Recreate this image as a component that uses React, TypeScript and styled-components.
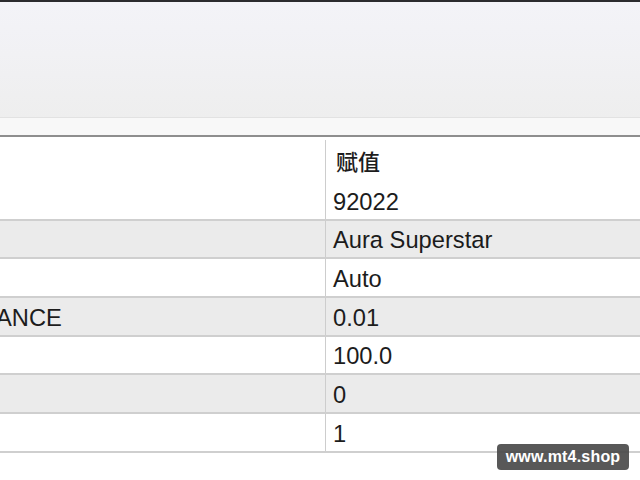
import React from "react";
import styled, { createGlobalStyle } from "styled-components";

const Global = createGlobalStyle`
  html, body { margin: 0; padding: 0; background: #ffffff; }
  body { width: 640px; height: 480px; overflow: hidden; font-family: "Liberation Sans", Arial, sans-serif; }
`;

const Page = styled.div`
  width: 640px;
  height: 480px;
  display: flex;
  flex-direction: column;
  overflow: hidden;
  position: relative;
  background: #ffffff;
`;

const TopEdge = styled.div`
  height: 2px;
  background: #2b2b2e;
  flex: none;
`;

const Toolbar = styled.div`
  height: 115px;
  flex: none;
  background: linear-gradient(#f3f3f8 0%, #f1f1f4 45%, #eeeeee 100%);
  border-bottom: 1px solid #e2e2e2;
`;

const Strip = styled.div`
  height: 17px;
  flex: none;
  background: #f8f8f8;
  border-bottom: 2px solid #8e8e8e;
`;

const TableWrap = styled.div`
  margin-left: -115px;
  width: 755px;
  display: flex;
  flex-direction: column;
`;

const Row = styled.div<{ $h: number; $shade?: boolean; $line?: boolean }>`
  display: grid;
  grid-template-columns: 440px 1fr;
  height: ${(p) => p.$h}px;
  box-sizing: border-box;
  background: ${(p) => (p.$shade ? "#ebebeb" : "#ffffff")};
  border-bottom: ${(p) => (p.$line ? "2px solid #cfcfcf" : "none")};
  font-size: 23.7px;
  color: #1c1c1c;
`;

const NameCell = styled.div`
  display: flex;
  align-items: center;
  padding-left: 7px;
  padding-top: 3px;
  white-space: nowrap;
  overflow: hidden;
`;

const ValueCell = styled.div<{ $cjk?: boolean }>`
  display: flex;
  align-items: center;
  padding-left: ${(p) => (p.$cjk ? "10px" : "7px")};
  padding-top: 3px;
  border-left: 1px solid #cdcdcd;
  white-space: nowrap;
  font-family: ${(p) =>
    p.$cjk ? '"Noto Sans CJK SC", "Liberation Sans", sans-serif' : '"Liberation Sans", Arial, sans-serif'};
  font-size: ${(p) => (p.$cjk ? "22px" : "23.7px")};
  font-weight: ${(p) => (p.$cjk ? 500 : 400)};
`;

const HeaderValue = styled(ValueCell)`
  margin-top: 3px;
  padding-top: 0;
  padding-bottom: 3px;
`;

const Badge = styled.div`
  position: absolute;
  left: 497px;
  top: 444px;
  width: 132px;
  height: 26px;
  border-radius: 4px;
  background: rgba(70, 70, 70, 0.9);
  color: #ffffff;
  font-family: "Liberation Sans", Arial, sans-serif;
  font-weight: bold;
  font-size: 16px;
  display: flex;
  align-items: center;
  justify-content: center;
  letter-spacing: 0.2px;
`;

const rows: { name: string; value: string; h: number }[] = [
  { name: "", value: "92022", h: 39 },
  { name: "", value: "Aura Superstar", h: 38 },
  { name: "", value: "Auto", h: 39 },
  { name: "LOT_BALANCE", value: "0.01", h: 39 },
  { name: "", value: "100.0", h: 38 },
  { name: "", value: "0", h: 39 },
  { name: "", value: "1", h: 39 },
];

export default function App() {
  return (
    <>
      <Global />
      <Page>
        <TopEdge />
        <Toolbar />
        <Strip />
        <TableWrap>
          <Row $h={45}>
            <NameCell />
            <HeaderValue $cjk>赋值</HeaderValue>
          </Row>
          {rows.map((r, i) => (
            <Row key={r.value} $h={r.h} $shade={i % 2 === 1} $line>
              <NameCell>{r.name}</NameCell>
              <ValueCell>{r.value}</ValueCell>
            </Row>
          ))}
        </TableWrap>
        <Badge>www.mt4.shop</Badge>
      </Page>
    </>
  );
}
